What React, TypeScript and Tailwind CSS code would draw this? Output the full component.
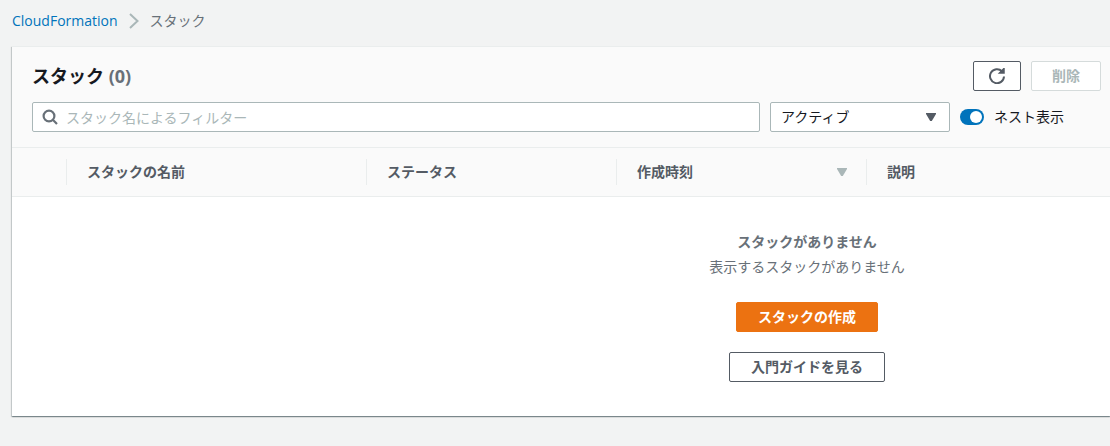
import { useState } from 'react'

const columns = [
  { label: 'スタックの名前', width: 'w-[300px]', sortable: false },
  { label: 'ステータス', width: 'w-[250px]', sortable: false },
  { label: '作成時刻', width: 'w-[250px]', sortable: true },
  { label: '説明', width: '', sortable: false },
]

function Caret({ className }: { className: string }) {
  return (
    <svg viewBox="0 0 10 8" className={`w-[10px] h-2 ${className}`} aria-hidden="true">
      <path d="M0 0h10v1L5.8 8H4.2L0 1z" fill="currentColor" />
    </svg>
  )
}

function Breadcrumbs() {
  return (
    <nav aria-label="Breadcrumb" className="flex items-center h-[22px] pl-3">
      <a href="#" className="text-[#0073bb]">CloudFormation</a>
      <svg viewBox="0 0 16 16" className="w-4 h-4 mx-2" fill="none" stroke="#aab7b8" strokeWidth="2" aria-hidden="true">
        <path d="M4 1l7.5 7L4 15" />
      </svg>
      <span className="text-[#687078]">スタック</span>
    </nav>
  )
}

function Header() {
  const [query, setQuery] = useState('')
  const [nested, setNested] = useState(true)

  return (
    <div className="bg-[#fafafa] border-b border-[#eaeded] pt-[14px] pb-[15px] pl-5 pr-[9px]">
      <div className="flex items-center justify-between">
        <h1 className="text-lg leading-[30px] font-bold text-[#16191f]">
          スタック <span className="text-[#687078]">(0)</span>
        </h1>
        <div className="flex gap-[10px]">
          <button aria-label="更新" className="flex items-center justify-center w-12 h-[30px] rounded-xs border border-[#545b64] bg-white text-[#545b64]">
            <svg viewBox="0 0 16 16" className="w-4 h-4" fill="none" stroke="currentColor" strokeWidth="2" aria-hidden="true">
              <path d="M15 8.5a7 7 0 1 1-2-5.2l1 1" />
              <path d="M15 0.5V5h-4.5z" fill="currentColor" strokeWidth="1.5" />
            </svg>
          </button>
          <button disabled className="h-[30px] px-5 rounded-xs border border-[#d5dbdb] bg-white font-bold text-[#aab7b8]">
            削除
          </button>
        </div>
      </div>

      <div className="flex items-center gap-[10px] mt-[11px]">
        <div className="relative flex-1">
          <svg viewBox="0 0 16 16" className="absolute left-[10px] top-[7px] w-4 h-4" fill="none" stroke="#687078" strokeWidth="2.2" aria-hidden="true">
            <circle cx="7" cy="7" r="5.4" />
            <path d="M10.8 10.8L15 15" />
          </svg>
          <input
            type="text"
            aria-label="スタック名によるフィルター"
            placeholder="スタック名によるフィルター"
            value={query}
            onChange={(e) => setQuery(e.target.value)}
            className="block w-full h-[30px] pl-[33px] pr-2 rounded-xs border border-[#aab7b8] bg-white text-[#16191f] placeholder:text-[#aab7b8]"
          />
        </div>
        <div className="relative w-[180px]">
          <select aria-label="ステータス" className="block appearance-none w-full h-[30px] pl-[10px] pr-8 rounded-xs border border-[#aab7b8] bg-white text-[#16191f]">
            <option>アクティブ</option>
            <option>削除済み</option>
          </select>
          <Caret className="absolute right-[14px] top-[11px] text-[#545b64] pointer-events-none" />
        </div>
        <label className="flex items-center gap-[10px] w-[141px] text-[#16191f]">
          <input
            type="checkbox"
            role="switch"
            checked={nested}
            onChange={(e) => setNested(e.target.checked)}
            className="appearance-none flex items-center w-6 h-4 px-[2px] rounded-full bg-[#687078] checked:bg-[#0073bb] checked:justify-end before:block before:w-3 before:h-3 before:rounded-full before:bg-white"
          />
          ネスト表示
        </label>
      </div>
    </div>
  )
}

function StackTable() {
  return (
    <div className="overflow-hidden">
      <table className="table-fixed w-[1590px] border-collapse">
        <thead>
          <tr className="h-12 bg-[#fafafa] border-b border-[#eaeded] text-left text-[#545b64]">
            <td className="w-[54px]" />
            {columns.map((c) => (
              <th key={c.label} scope="col" className={`p-0 ${c.width}`}>
                <div className="flex items-center justify-between h-[26px] pl-5 pr-[19px] border-l border-[#eaeded]">
                  {c.label}
                  {c.sortable && <Caret className="text-[#aab7b8]" />}
                </div>
              </th>
            ))}
          </tr>
        </thead>
        <tbody>
          <tr>
            <td colSpan={5} className="py-[34px]">
              <div className="flex flex-col items-center text-[#687078]">
                <b className="leading-[22px]">スタックがありません</b>
                <p className="mt-[3px] leading-[22px]">表示するスタックがありません</p>
                <button className="h-[30px] mt-6 px-[21px] rounded-xs border border-[#ec7211] bg-[#ec7211] font-bold text-white">
                  スタックの作成
                </button>
                <button className="h-[30px] mt-5 px-[21px] rounded-xs border border-[#545b64] bg-white font-bold text-[#545b64]">
                  入門ガイドを見る
                </button>
              </div>
            </td>
          </tr>
        </tbody>
      </table>
    </div>
  )
}

export default function App() {
  return (
    <main className="min-h-screen overflow-hidden pt-[10px] pb-7 bg-[#f2f3f3] text-sm leading-[22px] font-['Open_Sans','Noto_Sans_CJK_JP',sans-serif]">
      <Breadcrumbs />
      <section className="mt-[14px] ml-3 bg-white border-t border-[#eaeded] shadow-[0_1px_1px_0_rgba(0,28,36,0.3),1px_1px_1px_0_rgba(0,28,36,0.15),-1px_1px_1px_0_rgba(0,28,36,0.15)]">
        <Header />
        <StackTable />
      </section>
    </main>
  )
}
